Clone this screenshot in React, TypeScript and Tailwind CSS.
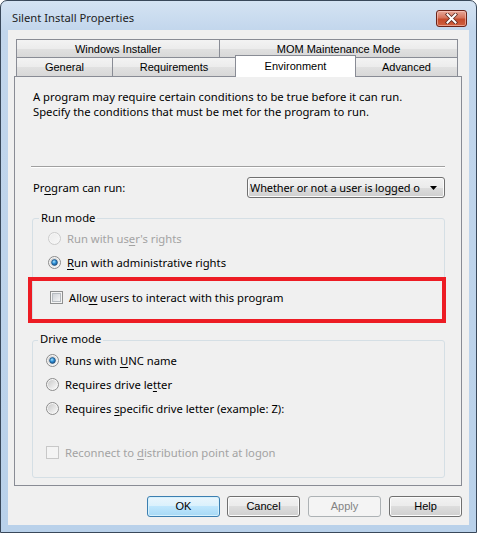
import React, { useId } from "react";

const UI = "font-['Noto_Sans',sans-serif] text-[11.25px] leading-[15px]";
const TH = "font-['Liberation_Sans',Arial,sans-serif] text-[11px]";

const TAB_BG =
  "bg-[linear-gradient(to_bottom,#f3f3f3_0%,#ececec_50%,#e1e1e1_50%,#d8d8d8_100%)]";
const BTN_BG =
  "bg-[linear-gradient(to_bottom,#f2f2f2_0%,#ebebeb_50%,#dddddd_50%,#cfcfcf_100%)]";

function Radio({ checked = false, disabled = false }: { checked?: boolean; disabled?: boolean }) {
  const id = useId().replace(/[^a-zA-Z0-9]/g, "");
  return (
    <svg width="13" height="13" viewBox="0 0 13 13" className="block shrink-0">
      <defs>
        <linearGradient id={`f${id}`} x1="0" y1="0" x2="1" y2="1">
          <stop offset="0" stopColor={disabled ? "#ececec" : "#c9c9c9"} />
          <stop offset="1" stopColor={disabled ? "#f7f7f7" : "#fafafa"} />
        </linearGradient>
        <radialGradient id={`d${id}`} cx="0.4" cy="0.35" r="0.75">
          <stop offset="0" stopColor="#a6e3ff" />
          <stop offset="0.45" stopColor="#2f8fd6" />
          <stop offset="1" stopColor="#174a7e" />
        </radialGradient>
      </defs>
      <circle cx="6.5" cy="6.5" r="6" fill="#f6f6f6" stroke={disabled ? "#cacaca" : "#8b8b8b"} />
      <circle cx="6.5" cy="6.5" r="4.6" fill={`url(#f${id})`} />
      {checked && (
        <circle cx="6.5" cy="6.5" r="2.9" fill={`url(#d${id})`} stroke="#1a4a78" strokeWidth="0.7" />
      )}
    </svg>
  );
}

function Checkbox({ disabled = false }: { disabled?: boolean }) {
  const id = useId().replace(/[^a-zA-Z0-9]/g, "");
  return (
    <svg width="13" height="13" viewBox="0 0 13 13" className="block shrink-0">
      <defs>
        <linearGradient id={`c${id}`} x1="0" y1="0" x2="1" y2="1">
          <stop offset="0" stopColor="#cdd1d6" />
          <stop offset="1" stopColor="#f7f7f7" />
        </linearGradient>
      </defs>
      <rect x="0.5" y="0.5" width="12" height="12" fill="#f4f4f4" stroke={disabled ? "#c8c8c8" : "#8e8f8f"} />
      {!disabled && <rect x="2.5" y="2.5" width="8" height="8" fill={`url(#c${id})`} stroke="#b6bbc0" />}
    </svg>
  );
}

function Row({
  control,
  children,
  gap = "ml-[6px]",
  disabled = false,
  className = "",
}: {
  control: React.ReactNode;
  children: React.ReactNode;
  gap?: string;
  disabled?: boolean;
  className?: string;
}) {
  return (
    <div className={`flex h-[24px] items-center ${className}`}>
      {control}
      <span className={`${gap} whitespace-nowrap ${disabled ? "text-[#a3a3a3]" : "text-black"}`}>
        {children}
      </span>
    </div>
  );
}

function Button({ children, kind = "normal", className = "" }: { children: React.ReactNode; kind?: "default" | "normal" | "disabled"; className?: string }) {
  const styles =
    kind === "default"
      ? "border-[#3c7fb1] bg-[linear-gradient(to_bottom,#eaf6fd_0%,#d9f0fc_50%,#bee6fd_50%,#a7d9f5_100%)] text-black shadow-[inset_0_0_0_1px_#d6f1fd]"
      : kind === "disabled"
      ? "border-[#adb2b5] bg-[#f4f4f4] text-[#838383]"
      : `border-[#707070] ${BTN_BG} text-black shadow-[inset_0_0_0_1px_#fbfbfb]`;
  return (
    <div
      className={`${TH} flex h-[21px] w-[73px] items-center justify-center rounded-[3px] border ${styles} ${className}`}
    >
      {children}
    </div>
  );
}

export default function App() {
  return (
    <div className="h-[533px] w-[477px] bg-white">
      <div className="flex h-[533px] w-[477px] flex-col rounded-t-[7px] border border-[#39485a] bg-[linear-gradient(to_bottom,#d4e3f3_0px,#c2d6ec_30px,#b9d1ea_100%)] px-[7px] pb-[7px]">
        {/* Title bar */}
        <div className="flex h-[29px] items-start">
          <div className={`${UI} ml-[4px] mt-[9px] text-[#1e1e1e]`}>Silent Install Properties</div>
          <div className="ml-auto mr-[2px] mt-[9px] flex h-[17px] w-[31px] items-center justify-center rounded-[3px] border border-[#6b2318] bg-[linear-gradient(to_bottom,#e7a99a_0%,#d6735b_45%,#c44a2b_55%,#d0603e_100%)] shadow-[inset_0_0_0_1px_rgba(255,210,200,0.55)]">
            <svg width="13" height="11" viewBox="0 0 13 11">
              <path d="M2.5 1.5 L10.5 9.5 M10.5 1.5 L2.5 9.5" stroke="#5a2a22" strokeWidth="3.6" strokeLinecap="square" />
              <path d="M2.5 1.5 L10.5 9.5 M10.5 1.5 L2.5 9.5" stroke="#ffffff" strokeWidth="2" strokeLinecap="square" />
            </svg>
          </div>
        </div>

        {/* Client area */}
        <div className="flex flex-1 flex-col bg-[#f0f0f0]">
          {/* Tabs */}
          <div className={`${TH} ml-[8px] mt-[9px] w-[442px] text-black`}>
            <div className="flex h-[18px]">
              <div className={`flex w-[203px] items-center justify-center border-l border-t border-[#898c95] pt-[2px] ${TAB_BG}`}>
                Windows Installer
              </div>
              <div className={`flex w-[239px] items-center justify-center border-l border-r border-t border-[#898c95] pt-[2px] ${TAB_BG}`}>
                MOM Maintenance Mode
              </div>
            </div>
            <div className="flex h-[19px]">
              <div className={`flex w-[96px] items-center justify-center border-l border-t border-[#898c95] ${TAB_BG}`}>
                General
              </div>
              <div className={`flex w-[123px] items-center justify-center border-l border-t border-[#898c95] ${TAB_BG}`}>
                Requirements
              </div>
              <div className="relative z-10 -mt-[2px] flex h-[22px] w-[121px] items-start justify-center self-start border-l border-r border-t border-[#898c95] bg-white pt-[2px]">
                Environment
              </div>
              <div className={`flex w-[102px] items-center justify-center border-r border-t border-[#898c95] ${TAB_BG}`}>
                Advanced
              </div>
            </div>
          </div>

          {/* Tab page */}
          <div className={`${UI} relative ml-[6px] w-[448px] border border-[#898c95] bg-[#f0f0f0] pb-[7px] pl-[17px] pr-[16px] pt-[12px] text-black`}>
            <div className="ml-[1px]">
              <div>A program may require certain conditions to be true before it can run.</div>
              <div>Specify the conditions that must be met for the program to run.</div>
            </div>

            <div className="-ml-[1px] mt-[47px] h-[2px] w-[414px] border-b border-t border-b-white border-t-[#a0a0a0]" />

            <div className="mt-[9px] flex h-[21px] items-center">
              <div className="ml-[1px]">
                Pr<span className="underline underline-offset-2">o</span>gram can run:
              </div>
              <div className={`ml-auto flex h-[21px] w-[198px] items-center rounded-[3px] border border-[#707070] ${BTN_BG} shadow-[inset_0_0_0_1px_#fbfbfb]`}>
                <div className="ml-[2px] min-w-0 flex-1 overflow-hidden whitespace-nowrap text-[11px] tracking-[-0.1px]">
                  Whether or not a user is logged o
                </div>
                <svg width="7" height="4" viewBox="0 0 7 4" className="ml-[3px] mr-[7px] shrink-0">
                  <path d="M0 0 H7 L3.5 4 Z" fill="#000" />
                </svg>
              </div>
            </div>

            {/* Run mode */}
            <fieldset className="mt-[12px] rounded-[3px] border border-[#d5dfe5]">
              <legend className="ml-[6px] px-[2px] pb-[1px]">Run mode</legend>
              <div className="pb-[11px] pl-[15px]">
                <Row control={<Radio disabled />} disabled>
                  Run with us<span className="underline underline-offset-2">e</span>r's rights
                </Row>
                <Row control={<Radio checked />}>
                  <span className="underline underline-offset-2">R</span>un with administrative rights
                </Row>
                <Row control={<Checkbox />} className="ml-[2px] mt-[11px]">
                  Allo<span className="underline underline-offset-2">w</span> users to interact with this program
                </Row>
              </div>
            </fieldset>

            {/* Drive mode */}
            <fieldset className="mt-[10px] rounded-[3px] border border-[#d5dfe5]">
              <legend className="ml-[5px] px-[2px] pb-[3px]">Drive mode</legend>
              <div className="pb-[13px] pl-[13px]">
                <Row control={<Radio checked />} className="-mt-[1px]">
                  Runs with <span className="underline underline-offset-2">U</span>NC name
                </Row>
                <Row control={<Radio />}>
                  Requires drive le<span className="underline underline-offset-2">t</span>ter
                </Row>
                <Row control={<Radio />}>
                  Requires <span className="underline underline-offset-2">s</span>pecific drive letter (example: Z):
                </Row>
                <Row control={<Checkbox disabled />} disabled className="mt-[20px]">
                  Reconnect to <span className="underline underline-offset-2">d</span>istribution point at logon
                </Row>
              </div>
            </fieldset>

            {/* Highlight box */}
            <div className="pointer-events-none absolute left-[13px] top-[200px] h-[46px] w-[418px] border-[4px] border-[#ed1c24]" />
          </div>

          {/* Buttons */}
          <div className="mt-[10px] flex justify-end pr-[7px]">
            <Button kind="default">OK</Button>
            <Button className="ml-[7px]">Cancel</Button>
            <Button kind="disabled" className="ml-[8px]">Apply</Button>
            <Button className="ml-[8px]">Help</Button>
          </div>
        </div>
      </div>
    </div>
  );
}
